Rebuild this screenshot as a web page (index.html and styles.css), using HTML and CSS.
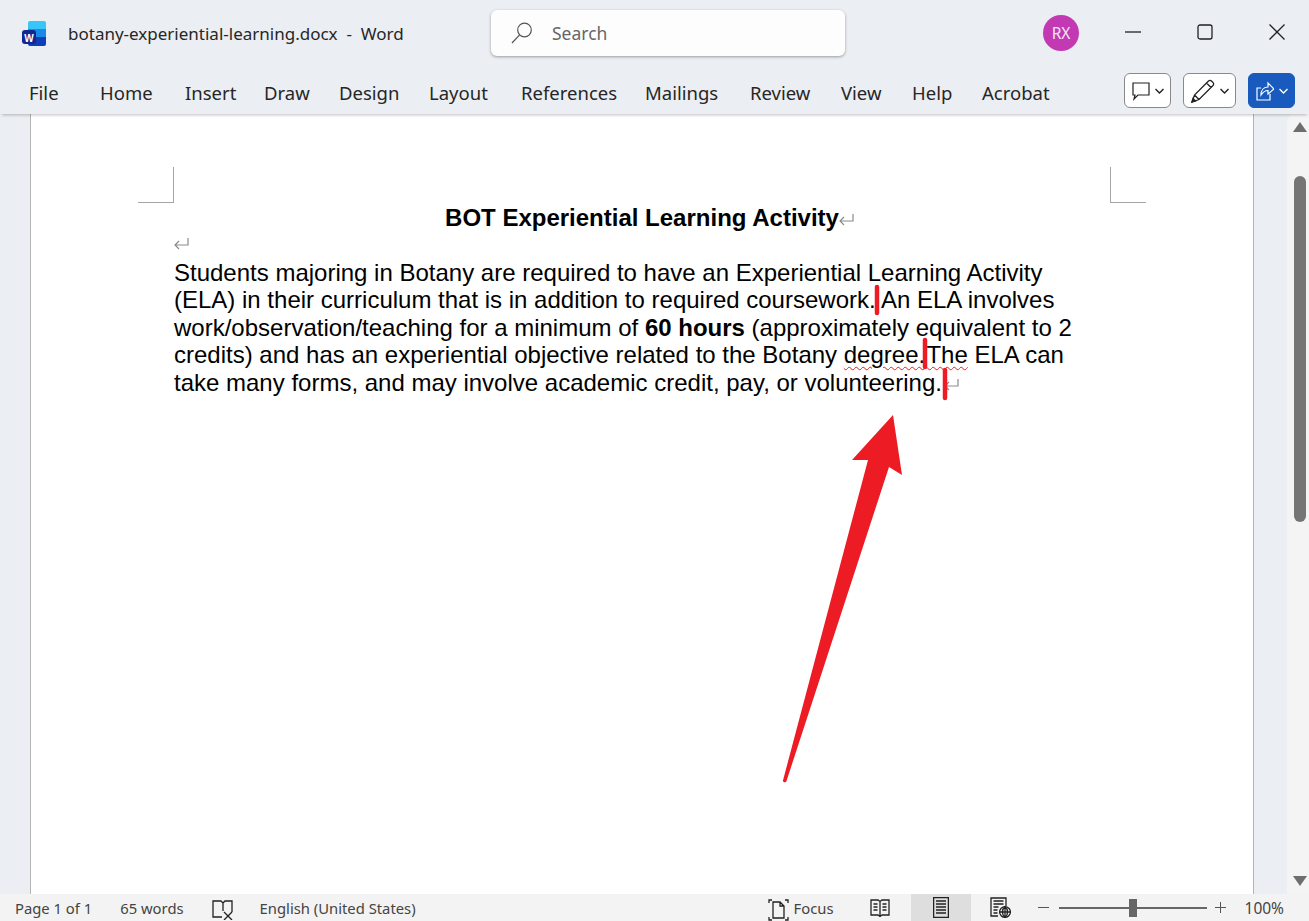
FILE: index.html
```html
<!DOCTYPE html>
<html lang="en">
  <head>
    <meta charset="UTF-8" />
    <meta name="viewport" content="width=device-width, initial-scale=1.0" />
    <link rel="stylesheet" href="styles.css">
    <title>botany-experiential-learning.docx - Word</title>
  </head>
  <body>
    <div class="app">
      <header class="titlebar">
        <svg class="word-logo" width="24" height="25" viewBox="0 0 24 25">
          <path d="M6 2a2 2 0 0 1 2-2h14a2 2 0 0 1 2 2v7H6z" fill="#37c6f9" />
          <rect x="6" y="8" width="18" height="8" fill="#1a8ae6" />
          <path d="M6 16h18v7a2 2 0 0 1-2 2H8a2 2 0 0 1-2-2z" fill="#0f3fb8" />
          <rect x="0" y="9" width="14" height="14" rx="3" fill="#10288f" />
          <text x="7" y="20.5" text-anchor="middle" class="word-w">W</text>
        </svg>
        <div class="doc-name">botany-experiential-learning.docx&nbsp; -&nbsp; Word</div>
        <div class="search">
          <svg width="22" height="22" viewBox="0 0 22 22" fill="none" stroke="#555" stroke-width="1.2">
            <circle cx="13.5" cy="8" r="6.8" />
            <path d="M8.6 12.8 1 21" />
          </svg>
          <span>Search</span>
        </div>
        <div class="avatar">RX</div>
        <div class="window-btns">
          <svg width="16" height="16" viewBox="0 0 16 16" stroke="#222" stroke-width="1.3" fill="none"><path d="M0 8h16" /></svg>
          <svg width="16" height="16" viewBox="0 0 16 16" stroke="#222" stroke-width="1.3" fill="none"><rect x="1" y="1" width="14" height="14" rx="2" /></svg>
          <svg width="16" height="16" viewBox="0 0 16 16" stroke="#222" stroke-width="1.3" fill="none"><path d="M.5.5l15 15M15.5.5l-15 15" /></svg>
        </div>
      </header>

      <nav class="ribbon">
        <div class="tabs">
          <a class="tab">File</a>
          <a class="tab">Home</a>
          <a class="tab">Insert</a>
          <a class="tab">Draw</a>
          <a class="tab">Design</a>
          <a class="tab">Layout</a>
          <a class="tab">References</a>
          <a class="tab">Mailings</a>
          <a class="tab">Review</a>
          <a class="tab">View</a>
          <a class="tab">Help</a>
          <a class="tab">Acrobat</a>
        </div>
        <div class="ribbon-btns">
          <button class="rbtn rbtn-comment">
            <svg width="18" height="20" viewBox="0 0 18 20" fill="none" stroke="#222" stroke-width="1.2"><path d="M1 2h16v12H6l-4 4 1-4H1z" /></svg>
            <svg class="chev" width="9" height="6" viewBox="0 0 9 6" fill="none" stroke="#222" stroke-width="1.4"><path d="M.5 1l4 4 4-4" /></svg>
          </button>
          <button class="rbtn rbtn-pen">
            <svg width="24" height="24" viewBox="0 0 24 24" fill="none" stroke="#222" stroke-width="1.3"><path d="M1 23l2.5-7L17.5 2a2 2 0 0 1 3 0l1.500 1.500a2 2 0 0 1 0 3L8 20.500zM3.500 16L8 20.500M15.500 4l4.500 4.500" /><path d="M1 23l1-3.500 2.500 2.500z" fill="#222" /></svg>
            <svg class="chev" width="9" height="6" viewBox="0 0 9 6" fill="none" stroke="#222" stroke-width="1.4"><path d="M.5 1l4 4 4-4" /></svg>
          </button>
          <button class="rbtn rbtn-share">
            <svg width="18" height="20" viewBox="0 0 18 20" fill="none" stroke="#fff" stroke-width="1.2"><path d="M5 7H1v12h13v-6" /><path d="M5 14c0-5 3-8 7-8V2l6 6-6 5V9.500c-3 0-5 1.500-7 4.500z" fill="#185abd" /></svg>
            <svg class="chev" width="9" height="6" viewBox="0 0 9 6" fill="none" stroke="#fff" stroke-width="1.4"><path d="M.5 1l4 4 4-4" /></svg>
          </button>
        </div>
      </nav>

      <main class="workspace">
        <div class="gutter"></div>
        <section class="page">
          <span class="crop crop-left"></span>
          <span class="crop crop-right"></span>
          <h1 class="doc-title">BOT Experiential Learning Activity<svg class="para para-title" width="15" height="12" viewBox="0 0 15 12"><path d="M14 0v7H1M5 3 1 7l4 4" /></svg></h1>
          <p class="empty-line"><svg class="para para-empty" width="15" height="12" viewBox="0 0 15 12"><path d="M14 0v7H1M5 3 1 7l4 4" /></svg></p>
          <p class="doc-line">Students majoring in Botany are required to have an Experiential Learning Activity</p>
          <p class="doc-line">(ELA) in their curriculum that is in addition to required coursework. An ELA involves</p>
          <p class="doc-line">work/observation/teaching for a minimum of <b>60 hours</b> (approximately equivalent to 2</p>
          <p class="doc-line">credits) and has an experiential objective related to the Botany <span class="squiggle">degree. The</span> ELA can</p>
          <p class="doc-line">take many forms, and may involve academic credit, pay, or volunteering.<svg class="para para-end" width="15" height="12" viewBox="0 0 15 12"><path d="M14 0v7H1M5 3 1 7l4 4" /></svg></p>
        </section>
        <div class="right-gap"></div>
        <aside class="scrollbar">
          <span class="arrow-up"></span>
          <span class="thumb"></span>
          <span class="arrow-down"></span>
        </aside>
        <svg class="annotation" width="1309" height="807" viewBox="0 114 1309 807">
          <path d="M893 415 902 475 889 467 786.500 781a1.700 1.700 0 0 1-3.400-1L868 460 852 460z" fill="#ed1c24" />
          <g stroke="#ed1c24" stroke-width="4.500" stroke-linecap="round">
            <path d="M877 287v26M925 340v27M945 370v28" />
          </g>
        </svg>
      </main>

      <footer class="statusbar">
        <span class="st-page">Page 1 of 1</span>
        <span class="st-words">65 words</span>
        <svg class="st-proof" width="22" height="20" viewBox="0 0 22 20" fill="none" stroke="#222" stroke-width="1.3"><path d="M10 17H1V1h8l2 2 2-2h7v11M11 3v8" /><path d="M12 12l8 8M20 12l-8 8" /></svg>
        <span class="st-lang">English (United States)</span>
        <div class="st-right">
          <svg class="st-focus-icon" width="21" height="22" viewBox="0 0 21 22" fill="none" stroke="#222" stroke-width="1.3"><path d="M1 4V1h3M17 1h3v3M1 18v3h3M17 21h3v-3M5 3h7l4 4v12H5zM12 3v4h4" /></svg>
          <span class="st-focus">Focus</span>
          <svg class="st-read" width="20" height="20" viewBox="0 0 20 20" fill="none" stroke="#222" stroke-width="1.300"><path d="M1 2h7l2 1.500L12 2h7v15h-7l-2 1.500L8 17H1zM10 3.500v15M3.500 6h4M3.500 9h4M3.500 12h4M12.500 6h4M12.500 9h4M12.500 12h4" /></svg>
          <div class="st-print">
            <svg width="16" height="21" viewBox="0 0 16 21" fill="none" stroke="#222" stroke-width="1.300"><path d="M.6.6h14.800v19.800H.6zM3 4h10M3 7h10M3 10h10M3 13h10M3 16h10" /></svg>
          </div>
          <svg class="st-web" width="21" height="21" viewBox="0 0 21 21" fill="none" stroke="#222" stroke-width="1.300"><path d="M8 19H1V1h15v8M3.500 4h10M3.500 7h10M3.500 10h5M3.500 13h4M3.500 16h4" /><circle cx="15" cy="15" r="5.400" /><path d="M9.600 15h10.800M15 9.600v10.800M15 9.600c-3.500 3-3.500 7.800 0 10.800M15 9.600c3.500 3 3.500 7.800 0 10.800" /></svg>
          <div class="zoom-minus"></div>
          <div class="slider"><span class="slider-knob"></span></div>
          <div class="zoom-plus"></div>
          <span class="st-zoom">100%</span>
        </div>
      </footer>
    </div>
  </body>
</html>
```

FILE: styles.css
```css
* {
  margin: 0;
  padding: 0;
  box-sizing: border-box;
}
html,
body {
  height: 100%;
  overflow: hidden;
}
body {
  font-family: "Noto Sans", "Open Sans", sans-serif;
  color: #262626;
}
.app {
  width: 1309px;
  height: 921px;
  display: flex;
  flex-direction: column;
  background: #ebeef2;
}

/* title bar */
.titlebar {
  height: 66px;
  flex: none;
  display: flex;
  align-items: flex-start;
}
.word-logo {
  margin: 21px 0 0 22px;
  flex: none;
}
.word-w {
  font-family: "Liberation Sans", sans-serif;
  font-weight: bold;
  font-size: 10px;
  fill: #fff;
}
.doc-name {
  width: 423px;
  margin: 21px 0 0 22px;
  font-size: 17px;
  line-height: 26px;
  white-space: nowrap;
}
.search {
  width: 354px;
  height: 46px;
  margin-top: 10px;
  padding-left: 20px;
  display: flex;
  align-items: center;
  gap: 19px;
  background: #fdfdfd;
  border-radius: 6px;
  box-shadow: 0 1px 3px rgba(0, 0, 0, 0.35);
  color: #666;
  font-size: 17.500px;
}
.avatar {
  width: 36px;
  height: 36px;
  margin: 15px 0 0 198px;
  border-radius: 50%;
  background: #c239b3;
  color: #f6e6f4;
  font-size: 15.500px;
  line-height: 36px;
  text-align: center;
  flex: none;
}
.window-btns {
  margin: 24px 0 0 46px;
  display: flex;
  gap: 56px;
}

/* ribbon */
.ribbon {
  height: 48px;
  flex: none;
  display: flex;
  align-items: flex-start;
  padding-left: 29px;
  position: relative;
  z-index: 2;
  box-shadow: 0 3px 3px -2px rgba(0, 0, 0, 0.25);
  background: #ebeef2;
}
.tabs {
  display: grid;
  grid-template-columns: 71px 85px 79px 75px 90px 92px 124px 105px 91px 71px 70px auto;
}
.tab {
  font-size: 18.500px;
  line-height: 24px;
  margin-top: 15px;
  white-space: nowrap;
}
.ribbon-btns {
  margin: 7px 0 0 auto;
  padding-right: 14px;
  display: flex;
  gap: 12px;
}
.rbtn {
  height: 35px;
  display: flex;
  align-items: center;
  justify-content: center;
  gap: 5px;
  background: #fff;
  border: 1px solid #8a8a8a;
  border-radius: 6px;
}
.rbtn-comment {
  width: 47px;
}
.rbtn-pen {
  width: 53px;
}
.rbtn-share {
  width: 47px;
  background: #185abd;
  border-color: #185abd;
}

/* document area */
.workspace {
  flex: 1;
  min-height: 0;
  display: flex;
  position: relative;
  overflow: hidden;
}
.gutter {
  width: 30px;
  flex: none;
}
.page {
  width: 1224px;
  flex: none;
  position: relative;
  padding: 89.500px 143px 0 143px;
  background: #fff;
  border-left: 1px solid #b4b4b4;
  border-right: 1px solid #b4b4b4;
  font-family: "Liberation Sans", Arial, sans-serif;
  color: #000;
  font-size: 24px;
  line-height: 27.500px;
}
.crop {
  position: absolute;
  top: 53px;
  width: 36px;
  height: 36px;
  border-bottom: 1px solid #a6a6a6;
}
.crop-left {
  left: 107px;
  border-right: 1px solid #a6a6a6;
}
.crop-right {
  right: 107px;
  border-left: 1px solid #a6a6a6;
}
.doc-title {
  font-size: 24px;
  line-height: 27.500px;
  font-weight: bold;
  text-align: center;
  white-space: nowrap;
}
.empty-line {
  height: 27.500px;
}
.doc-line {
  white-space: nowrap;
}
.squiggle {
  word-spacing: -5px;
  text-decoration: underline wavy #e02020 1px;
  text-underline-offset: 3px;
}
.para {
  fill: none;
  stroke: #8c8c8c;
  stroke-width: 1.200;
}
.para-title {
  margin-right: -15px;
}
.para-empty {
  margin-bottom: 3px;
}
.para-end {
  margin-left: 2px;
}
.right-gap {
  width: 33px;
  flex: none;
}
.scrollbar {
  width: 22px;
  flex: none;
  position: relative;
  background: #f4f4f4;
  border-radius: 8px 0 0 0;
}
.thumb {
  position: absolute;
  left: 7px;
  top: 62px;
  width: 12px;
  height: 346px;
  border-radius: 6px;
  background: #757575;
}
.arrow-up,
.arrow-down {
  position: absolute;
  left: 6px;
  width: 0;
  height: 0;
  border-left: 7px solid transparent;
  border-right: 7px solid transparent;
}
.arrow-up {
  top: 8px;
  border-bottom: 10px solid #6e6e6e;
}
.arrow-down {
  bottom: 8px;
  border-top: 10px solid #6e6e6e;
}
.annotation {
  position: absolute;
  left: 0;
  top: 0;
  pointer-events: none;
}

/* status bar */
.statusbar {
  height: 27px;
  flex: none;
  display: flex;
  align-items: center;
  background: #f3f3f3;
  font-size: 14.800px;
  color: #444;
  white-space: nowrap;
}
.st-page {
  margin-left: 15px;
}
.st-words {
  margin-left: 28px;
}
.st-proof {
  margin: 5px 0 0 28px;
}
.st-lang {
  margin-left: 26px;
}
.st-right {
  margin-left: auto;
  height: 100%;
  display: flex;
  align-items: center;
}
.st-focus-icon {
  margin-top: 4px;
}
.st-focus {
  margin-left: 5px;
}
.st-read {
  margin-left: 36px;
}
.st-print {
  width: 60px;
  height: 100%;
  margin-left: 21px;
  background: #dedede;
  display: flex;
  align-items: center;
  justify-content: center;
}
.st-web {
  margin: 0 0 0 19px;
}
.zoom-minus {
  width: 11px;
  height: 1px;
  margin-left: 27px;
  background: #555;
}
.slider {
  width: 148px;
  height: 2px;
  margin-left: 10px;
  background: #666;
  position: relative;
}
.slider-knob {
  position: absolute;
  left: 70px;
  top: -8px;
  width: 8px;
  height: 18px;
  background: #666;
}
.zoom-plus {
  width: 11px;
  height: 11px;
  margin-left: 8px;
  background: linear-gradient(#555, #555) center / 11px 1px no-repeat,
    linear-gradient(#555, #555) center / 1px 11px no-repeat;
}
.st-zoom {
  margin: 0 25px 0 19px;
  font-size: 15.500px;
}
```
